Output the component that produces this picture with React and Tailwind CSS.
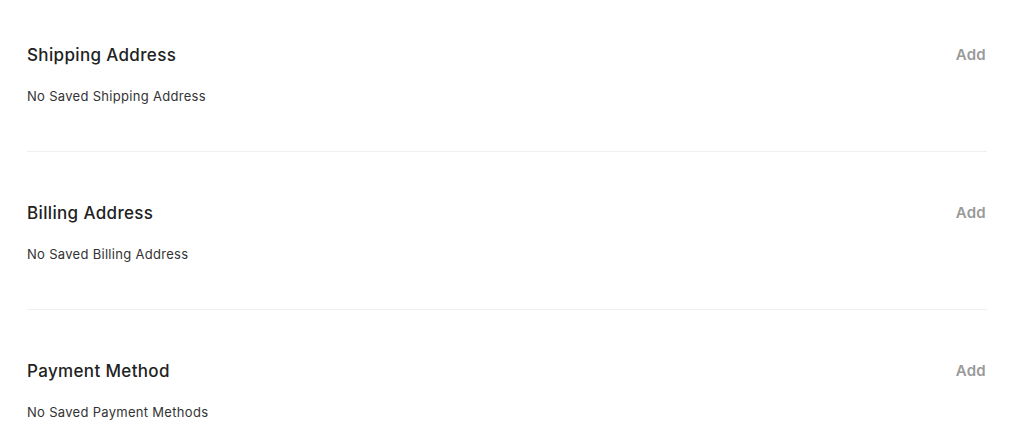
const sections = [
  { title: "Shipping Address", empty: "No Saved Shipping Address" },
  { title: "Billing Address", empty: "No Saved Billing Address" },
  { title: "Payment Method", empty: "No Saved Payment Methods" },
];

export default function App() {
  return (
    <div className="min-h-screen bg-white font-['Inter','Liberation_Sans',sans-serif]">
      <div className="ml-[27px] w-[960px] pt-[44px]">
        {sections.map((s, i) => (
          <section key={s.title}>
            {i > 0 && <div className="mb-[50px] mt-[45px] h-px bg-[#efefef]" />}
            <div className="flex h-6 items-center justify-between">
              <h2 className="text-[17px] font-medium tracking-[0.35px] text-[#222]">
                {s.title}
              </h2>
              <button className="mb-[2px] mr-[1px] text-[15px] font-semibold tracking-[0.3px] text-[#999]">
                Add
              </button>
            </div>
            <p className="mt-[18px] h-5 text-[13px] leading-5 tracking-[0.3px] text-[#333]">
              {s.empty}
            </p>
          </section>
        ))}
      </div>
    </div>
  );
}
